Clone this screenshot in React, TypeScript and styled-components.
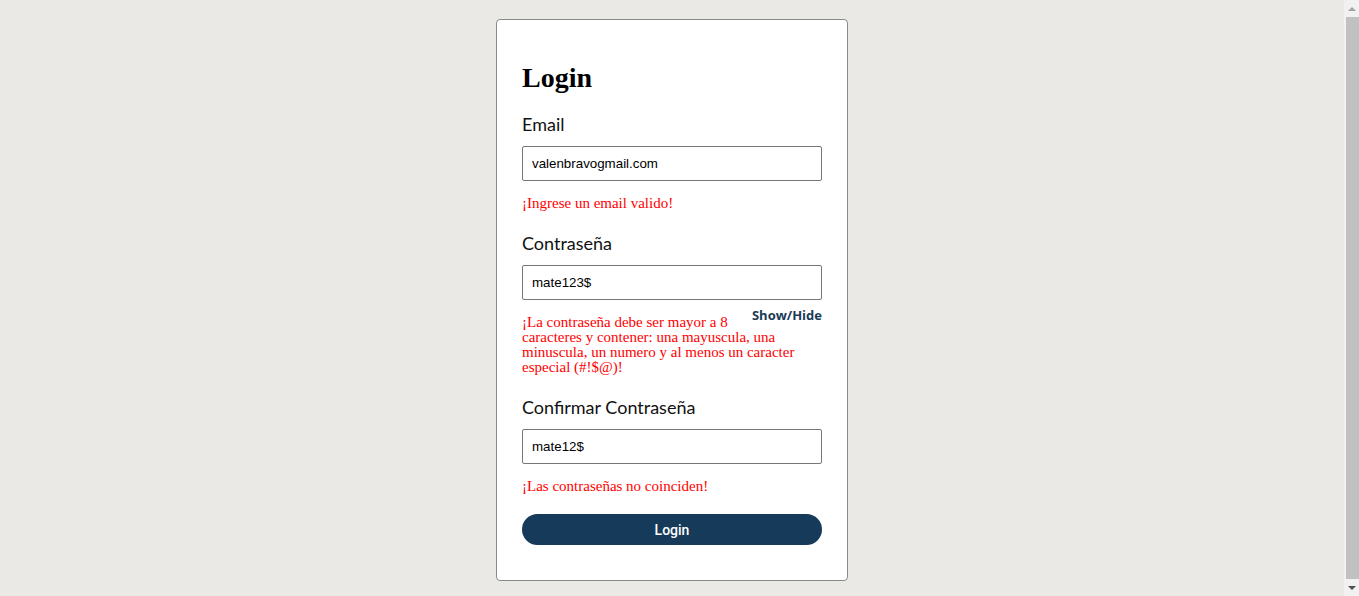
import React from "react";
import styled, { createGlobalStyle } from "styled-components";

const GlobalStyle = createGlobalStyle`
  html, body {
    margin: 0;
    padding: 0;
    background: #ebe9e5;
  }
  * { box-sizing: border-box; }
`;

const Page = styled.div`
  display: flex;
  justify-content: center;
  padding: 19px 15px 20px 0;
  min-height: 601px;
`;

const Card = styled.form`
  width: 352px;
  background: #ffffff;
  border: 1px solid #8a8a8a;
  border-radius: 4px;
  padding: 43px 25px 33px;
  display: flex;
  flex-direction: column;
`;

const Title = styled.h2`
  margin: 0 0 19px;
  font-family: "Liberation Serif", serif;
  font-weight: 700;
  font-size: 28px;
  line-height: 30px;
  color: #000;
`;

const Label = styled.label<{ $first?: boolean }>`
  display: block;
  margin-top: ${(p) => (p.$first ? "0" : "20px")};
  font-family: Lato, "Open Sans", sans-serif;
  font-size: 18px;
  line-height: 24px;
  color: #111;
`;

const Input = styled.input`
  display: block;
  width: 300px;
  height: 35px;
  margin-top: 10px;
  padding: 0 9px;
  border: 1px solid #767676;
  border-radius: 2px;
  font-family: "Liberation Sans", Arial, sans-serif;
  font-size: 13.333px;
  color: #000;
  background: #fff;
  outline: none;
`;

const ErrorText = styled.p`
  margin: 15px 0 0;
  font-family: "Liberation Serif", serif;
  font-size: 15px;
  line-height: 15px;
  color: #ff0000;
`;

const ToggleButton = styled.button`
  float: right;
  margin: -7px 0 0 8px;
  padding: 0;
  border: none;
  background: none;
  font-family: "Open Sans", sans-serif;
  font-weight: 700;
  font-size: 13px;
  line-height: 14px;
  color: #1b3a57;
  cursor: pointer;
`;

const SubmitButton = styled.button`
  margin-top: 20px;
  width: 300px;
  height: 31px;
  border: none;
  border-radius: 16px;
  background: #163a5a;
  color: #ffffff;
  font-family: Roboto, "Liberation Sans", sans-serif;
  font-weight: 500;
  font-size: 14px;
  cursor: pointer;
`;

const Scrollbar = styled.div`
  position: fixed;
  top: 0;
  right: 0;
  bottom: 0;
  width: 15px;
  background: #f1f1f1;
  display: flex;
  flex-direction: column;
  align-items: center;
`;

const Arrow = styled.div<{ $down?: boolean }>`
  flex: 0 0 17px;
  display: flex;
  align-items: center;
  justify-content: center;
  &::before {
    content: "";
    width: 0;
    height: 0;
    border-left: 4px solid transparent;
    border-right: 4px solid transparent;
    ${(p) =>
      p.$down
        ? "border-top: 4px solid #505050;"
        : "border-bottom: 4px solid #a3a3a3;"}
  }
`;

const Thumb = styled.div`
  flex: 1;
  width: 13px;
  margin-left: 1px;
  background: #c1c1c1;
`;

export default function App() {
  return (
    <>
      <GlobalStyle />
      <Page>
        <Card onSubmit={(e) => e.preventDefault()}>
          <Title>Login</Title>
          <Label $first>Email</Label>
          <Input type="text" defaultValue="valenbravogmail.com" />
          <ErrorText>¡Ingrese un email valido!</ErrorText>

          <Label>Contraseña</Label>
          <Input type="text" defaultValue="mate123$" />
          <ErrorText>
            <ToggleButton type="button">Show/Hide</ToggleButton>
            ¡La contraseña debe ser mayor a 8 caracteres y contener: una
            mayuscula, una minuscula, un numero y al menos un caracter especial
            (#!$@)!
          </ErrorText>

          <Label>Confirmar Contraseña</Label>
          <Input type="text" defaultValue="mate12$" />
          <ErrorText>¡Las contraseñas no coinciden!</ErrorText>

          <SubmitButton type="submit">Login</SubmitButton>
        </Card>
      </Page>
      <Scrollbar aria-hidden>
        <Arrow />
        <Thumb />
        <Arrow $down />
      </Scrollbar>
    </>
  );
}
